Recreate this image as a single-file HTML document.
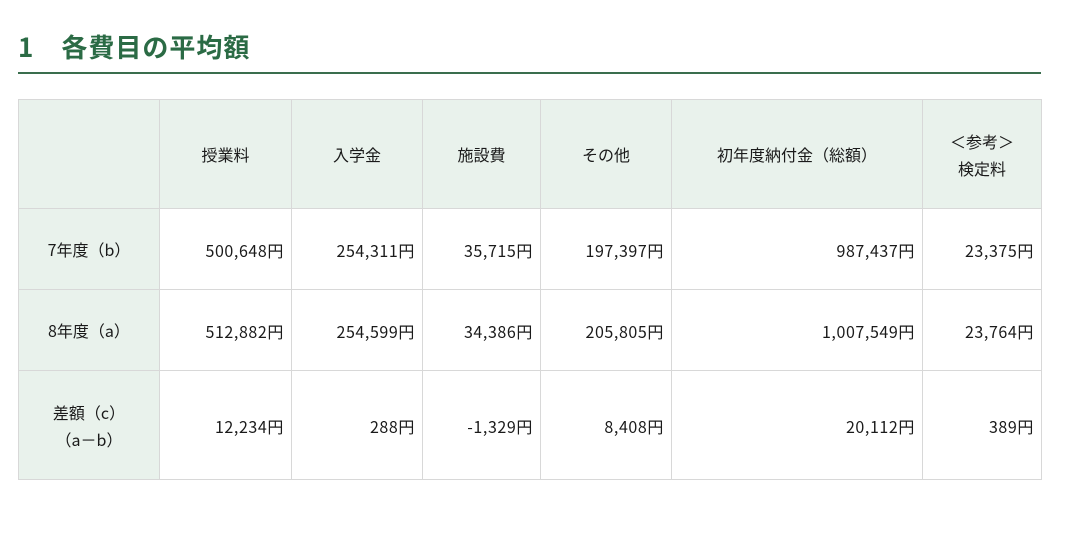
<!DOCTYPE html>
<html><head><meta charset="utf-8"><style>
body{margin:0;background:#fff;font-family:"Noto Sans CJK JP",sans-serif;color:#1a1a1a;}
h1{position:absolute;left:18px;top:29px;margin:0;font-size:26px;font-weight:bold;color:#2b6b45;line-height:36px;letter-spacing:1px;}
.line{position:absolute;left:18px;top:72px;width:1023px;height:2px;background:#3a6e4e;}
table{position:absolute;left:18px;top:99px;border-collapse:collapse;table-layout:fixed;font-size:16px;}
td{border:1px solid #d8d8d8;padding:1px 8px 0;}
.h{background:#e9f2ec;text-align:center;line-height:27px;}
.n{text-align:right;letter-spacing:0.6px;padding-right:7px;}
</style></head><body>
<h1>1　各費目の平均額</h1>
<div class="line"></div>
<table>
<colgroup><col style="width:141px"><col style="width:132px"><col style="width:131px"><col style="width:118px"><col style="width:131px"><col style="width:251px"><col style="width:119px"></colgroup>
<tr style="height:109px"><td class="h"></td><td class="h">授業料</td><td class="h">入学金</td><td class="h">施設費</td><td class="h">その他</td><td class="h">初年度納付金（総額）</td><td class="h">＜参考＞<br>検定料</td></tr>
<tr style="height:81px"><td class="h">7年度（b）</td><td class="n">500,648円</td><td class="n">254,311円</td><td class="n">35,715円</td><td class="n">197,397円</td><td class="n">987,437円</td><td class="n">23,375円</td></tr>
<tr style="height:81px"><td class="h">8年度（a）</td><td class="n">512,882円</td><td class="n">254,599円</td><td class="n">34,386円</td><td class="n">205,805円</td><td class="n">1,007,549円</td><td class="n">23,764円</td></tr>
<tr style="height:109px"><td class="h">差額（c）<br>（a－b）</td><td class="n">12,234円</td><td class="n">288円</td><td class="n">-1,329円</td><td class="n">8,408円</td><td class="n">20,112円</td><td class="n">389円</td></tr>
</table>
</body></html>
